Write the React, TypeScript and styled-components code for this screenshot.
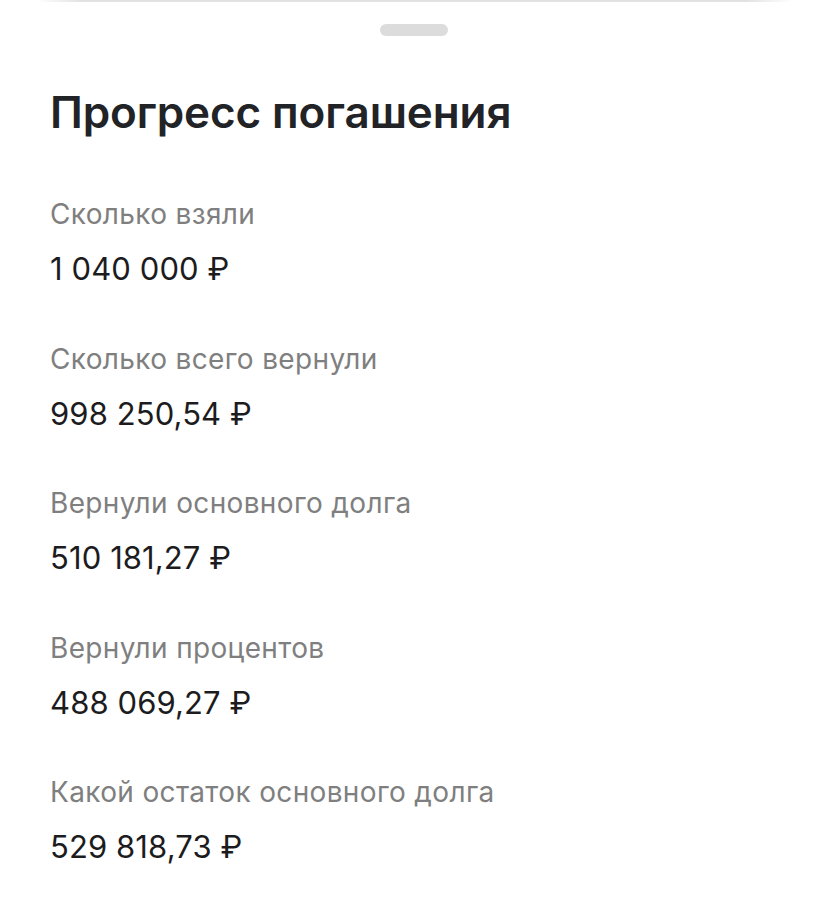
import React from "react";
import styled, { createGlobalStyle } from "styled-components";

const Global = createGlobalStyle`
  html, body { margin: 0; padding: 0; background: #ffffff; }
  body { font-family: Inter, "Noto Sans", sans-serif; -webkit-font-smoothing: antialiased; }
`;

const Page = styled.div`
  width: 828px;
  min-height: 902px;
  background: #ffffff;
  display: flex;
  flex-direction: column;
`;

const BackEdge = styled.div`
  height: 2px;
  margin: 0 36px;
  background: linear-gradient(90deg, rgba(220,220,220,0) 0%, #e2e2e2 6%, #e2e2e2 94%, rgba(220,220,220,0) 100%);
  border-radius: 0 0 2px 2px;
`;

const Sheet = styled.div`
  display: flex;
  flex-direction: column;
  padding: 22px 50px 0;
`;

const Handle = styled.div`
  align-self: center;
  width: 68px;
  height: 12px;
  border-radius: 6px;
  background: #dcdcdc;
`;

const Title = styled.h1`
  margin: 50px 0 0;
  font-size: 44px;
  line-height: 52px;
  font-weight: 600;
  color: #222326;
  letter-spacing: -0.1px;
`;

const List = styled.div`
  display: flex;
  flex-direction: column;
  gap: 51.5px;
  margin-top: 58px;
`;

const Item = styled.div`
  display: flex;
  flex-direction: column;
  gap: 17px;
`;

const Label = styled.div`
  font-size: 28px;
  line-height: 36px;
  font-weight: 400;
  color: #7f7f7f;
  letter-spacing: 0.35px;
`;

const Value = styled.div`
  font-size: 31px;
  line-height: 40px;
  font-weight: 400;
  color: #1c1c1e;
  letter-spacing: 0.1px;
`;

const items = [
  { label: "Сколько взяли", value: "1 040 000 ₽" },
  { label: "Сколько всего вернули", value: "998 250,54 ₽" },
  { label: "Вернули основного долга", value: "510 181,27 ₽" },
  { label: "Вернули процентов", value: "488 069,27 ₽" },
  { label: "Какой остаток основного долга", value: "529 818,73 ₽" },
];

export default function App() {
  return (
    <Page>
      <Global />
      <BackEdge />
      <Sheet>
        <Handle />
        <Title>Прогресс погашения</Title>
        <List>
          {items.map((it) => (
            <Item key={it.label}>
              <Label>{it.label}</Label>
              <Value>{it.value}</Value>
            </Item>
          ))}
        </List>
      </Sheet>
    </Page>
  );
}
